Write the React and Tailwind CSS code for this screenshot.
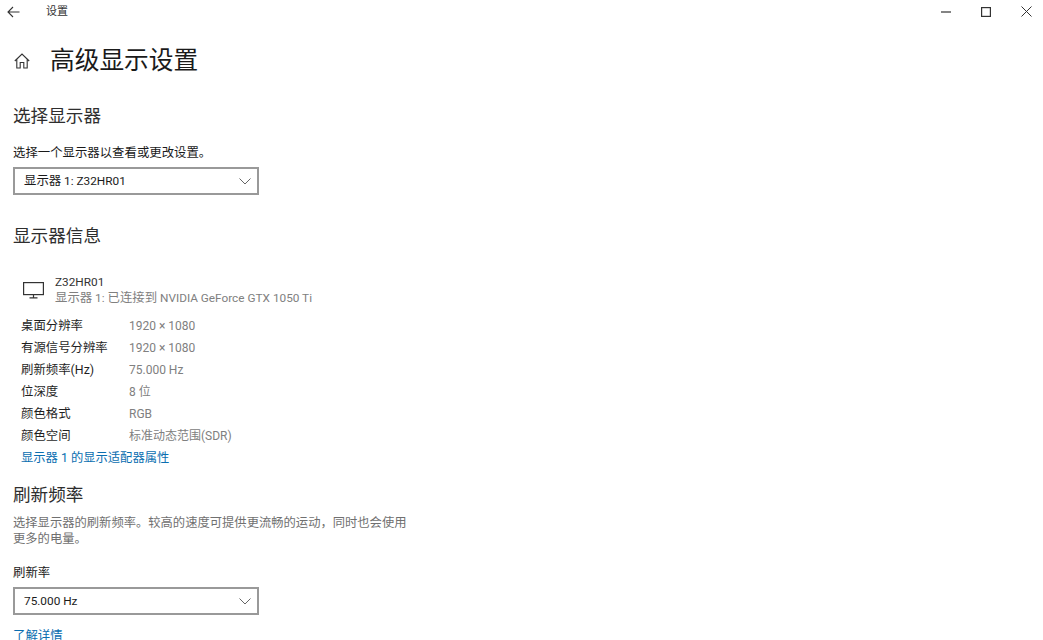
import React from "react";

const FONT = "font-['Roboto','Noto_Sans_CJK_SC',sans-serif]";

function Select({ children }) {
  return (
    <div className="w-[246px] h-[28px] border-2 border-[#999999] bg-white flex items-center justify-between pl-[9px] pr-[6px]">
      <span className="text-[11.8px] leading-[16px] text-[#1a1a1a]">{children}</span>
      <svg width="12" height="7" viewBox="0 0 12 7" fill="none" stroke="#666666" strokeWidth="1">
        <path d="M0.5 0.5 L6 6 L11.5 0.5" />
      </svg>
    </div>
  );
}

const rows = [
  ["桌面分辨率", "1920 × 1080"],
  ["有源信号分辨率", "1920 × 1080"],
  ["刷新频率(Hz)", "75.000 Hz"],
  ["位深度", "8 位"],
  ["颜色格式", "RGB"],
  ["颜色空间", "标准动态范围(SDR)"],
];

export default function App() {
  return (
    <div className={`${FONT} w-[1043px] h-[640px] overflow-hidden bg-white text-[#1a1a1a] flex flex-col`}>
      <div className="h-[23px] flex items-center justify-between shrink-0">
        <div className="flex items-center">
          <svg className="ml-[7px]" width="13" height="12" viewBox="0 0 13 12" fill="none" stroke="#333333" strokeWidth="1.1">
            <path d="M12.5 6 H1 M6 1 L1 6 L6 11" />
          </svg>
          <span className="ml-[26px] text-[11px] leading-[16px] text-[#333333]">设置</span>
        </div>
        <div className="flex items-center gap-[30px] pr-[11px]">
          <svg width="10" height="10" viewBox="0 0 10 10" stroke="#333333" strokeWidth="1.2"><path d="M0 5 H10" /></svg>
          <svg width="10" height="10" viewBox="0 0 10 10" fill="none" stroke="#333333" strokeWidth="1.2"><rect x="0.6" y="0.6" width="8.8" height="8.8" /></svg>
          <svg width="11" height="11" viewBox="0 0 11 11" stroke="#333333" strokeWidth="1"><path d="M0.5 0.5 L10.5 10.5 M10.5 0.5 L0.5 10.5" /></svg>
        </div>
      </div>

      <div className="flex items-center h-[32px] mt-[22px] pl-[14px]">
        <svg width="16" height="16" viewBox="0 0 16 16" fill="none" stroke="#333333" strokeWidth="1.1">
          <path d="M0.8 8 L8 1 L15.2 8 M2.8 6.5 V15 H6.2 V9.5 H9.8 V15 H13.2 V6.5" />
        </svg>
        <h1 className="ml-[20px] text-[24.7px] leading-[32px] font-normal text-[#1a1a1a]">高级显示设置</h1>
      </div>

      <div className="pl-[13px] flex flex-col items-start">
        <h2 className="mt-[27px] text-[17.6px] leading-[24px] font-normal text-[#2e2e2e]">选择显示器</h2>
        <p className="mt-[17px] text-[12.4px] leading-[16px]">选择一个显示器以查看或更改设置。</p>
        <div className="mt-[6px]">
          <Select><span className="text-[12.4px]">显示器</span> 1: Z32HR01</Select>
        </div>

        <h2 className="mt-[29px] text-[17.6px] leading-[24px] font-normal text-[#2e2e2e]">显示器信息</h2>

        <div className="mt-[27px] ml-[10px] flex items-center">
          <svg width="21" height="17" viewBox="0 0 21 17" fill="none" stroke="#333333" strokeWidth="1.2">
            <rect x="0.6" y="0.6" width="19.8" height="12" />
            <path d="M10.5 12.6 V15.8 M6.5 15.8 H14.5" />
          </svg>
          <div className="ml-[11px] flex flex-col text-[11.8px]">
            <span className="leading-[15px] text-[#333333]">Z32HR01</span>
            <span className="leading-[15px] text-[#808080]">
              <span className="text-[12.4px]">显示器</span> 1: <span className="text-[12.4px]">已连接到</span> NVIDIA GeForce GTX 1050 Ti
            </span>
          </div>
        </div>

        <div className="mt-[9px] ml-[8px] flex flex-col">
          {rows.map(([k, v]) => (
            <div key={k} className="flex h-[22px] items-center text-[12.4px]">
              <span className="w-[108px] text-[#1f1f1f]">{k}</span>
              <span className="text-[12px] text-[#808080]">{v}</span>
            </div>
          ))}
          <a className="h-[22px] flex items-center text-[12.3px] text-[#0a6eb0]">显示器 1 的显示适配器属性</a>
        </div>

        <h2 className="mt-[14px] text-[17.6px] leading-[24px] font-normal text-[#2e2e2e]">刷新频率</h2>
        <p className="mt-[8px] w-[400px] text-[12.3px] leading-[16px] text-[#707070]">
          选择显示器的刷新频率。较高的速度可提供更流畅的运动，同时也会使用更多的电量。
        </p>
        <p className="mt-[18px] text-[12.4px] leading-[16px]">刷新率</p>
        <div className="mt-[6px]"><Select>75.000 Hz</Select></div>
        <a className="mt-[13px] text-[12.4px] leading-[16px] text-[#0a6eb0]">了解详情</a>
      </div>
    </div>
  );
}
